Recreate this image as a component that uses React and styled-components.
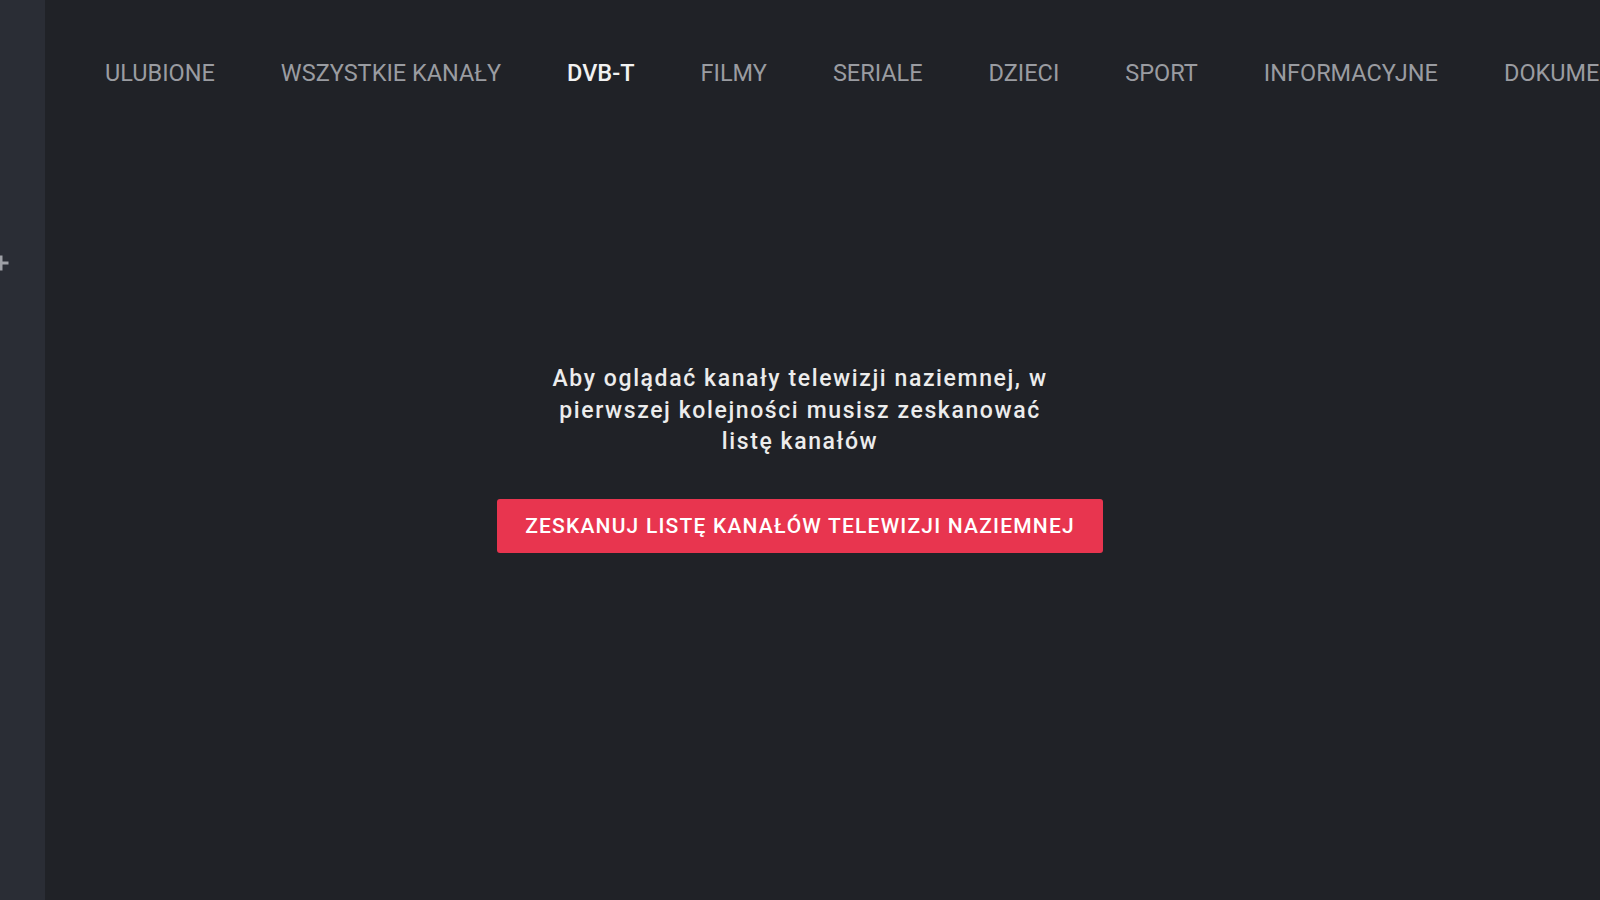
import React from "react";
import styled, { createGlobalStyle } from "styled-components";

const Global = createGlobalStyle`
  html, body { margin: 0; padding: 0; background: #202227; }
  body { font-family: Roboto, "Liberation Sans", sans-serif; overflow: hidden; }
`;

const Shell = styled.div`
  display: flex;
  width: 100vw;
  height: 100vh;
  background: #202227;
  overflow: hidden;
`;

const Sidebar = styled.aside`
  flex: 0 0 45px;
  background: #2a2d35;
  display: flex;
  flex-direction: column;
  padding-top: 254px;
  box-sizing: border-box;
  overflow: hidden;
`;

const SideIcon = styled.svg`
  margin-left: -8px;
  width: 18px;
  height: 18px;
  color: #9ea0a6;
`;

const Main = styled.main`
  flex: 1;
  min-width: 0;
  display: flex;
  flex-direction: column;
`;

const Tabs = styled.nav`
  display: flex;
  gap: 66px;
  padding: 59px 0 0 60px;
  white-space: nowrap;
  overflow: hidden;
`;

const Tab = styled.span`
  font-size: 23.5px;
  line-height: 28px;
  text-transform: uppercase;
  font-weight: ${(p) => (p.$active ? 500 : 400)};
  color: ${(p) => (p.$active ? "#f2f2f2" : "#9a9ca1")};
  flex: 0 0 auto;
`;

const Empty = styled.section`
  display: flex;
  flex-direction: column;
  align-items: center;
  padding-top: 276px;
  padding-right: 45px;
`;

const Message = styled.p`
  margin: 0;
  width: 540px;
  text-align: center;
  font-size: 23px;
  font-weight: 500;
  letter-spacing: 1.6px;
  line-height: 31.5px;
  color: #ececec;
`;

const ScanButton = styled.button`
  margin-top: 41px;
  width: 606px;
  height: 54px;
  border: none;
  border-radius: 3px;
  background: #e8354f;
  color: #ffffff;
  font-family: Roboto, "Liberation Sans", sans-serif;
  font-size: 21px;
  font-weight: 500;
  letter-spacing: 1.2px;
  text-transform: uppercase;
  cursor: pointer;
`;

const tabs = [
  "Ulubione",
  "Wszystkie kanały",
  "DVB-T",
  "Filmy",
  "Seriale",
  "Dzieci",
  "Sport",
  "Informacyjne",
  "Dokumentalne",
  "Rozrywka",
];

export default function App() {
  return (
    <>
      <Global />
      <Shell>
        <Sidebar>
          <SideIcon viewBox="0 0 18 18" fill="none" stroke="currentColor" strokeWidth="3" strokeLinecap="square">
            <path d="M9 3v12M3 9h12" />
          </SideIcon>
        </Sidebar>
        <Main>
          <Tabs>
            {tabs.map((t) => (
              <Tab key={t} $active={t === "DVB-T"}>
                {t}
              </Tab>
            ))}
          </Tabs>
          <Empty>
            <Message>
              Aby oglądać kanały telewizji naziemnej, w pierwszej kolejności musisz zeskanować listę kanałów
            </Message>
            <ScanButton>Zeskanuj listę kanałów telewizji naziemnej</ScanButton>
          </Empty>
        </Main>
      </Shell>
    </>
  );
}
